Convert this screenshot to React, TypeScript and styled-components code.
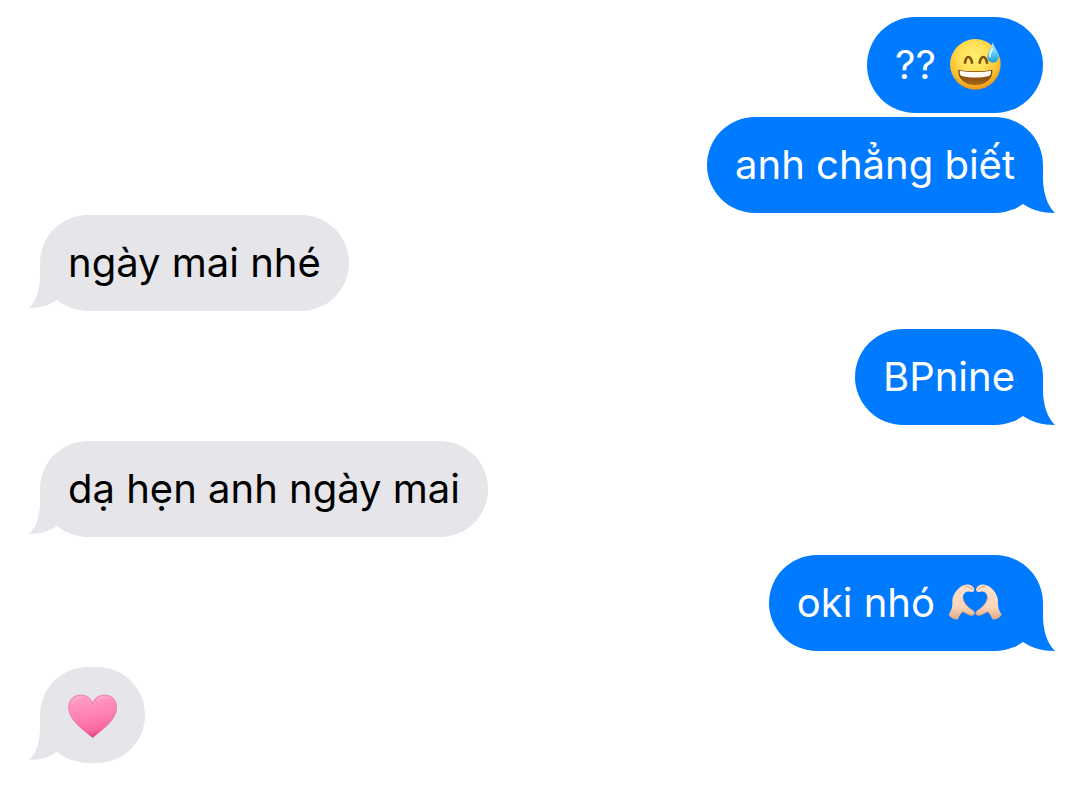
import React from "react";
import styled, { createGlobalStyle } from "styled-components";

const GlobalStyle = createGlobalStyle`
  body {
    margin: 0;
    background: #ffffff;
  }
`;

type Side = "sent" | "received";

const Conversation = styled.main`
  padding: 17px 37px 32px 40px;
  font-family: Inter, "Liberation Sans", sans-serif;
  font-size: 40px;
  line-height: 52px;
`;

const Thread = styled.ol`
  display: flex;
  flex-direction: column;
  margin: 0;
  padding: 0;
  list-style: none;
`;

const Bubble = styled.li<{ $side: Side; $gap: number }>`
  position: relative;
  display: flex;
  align-items: center;
  align-self: ${(p) => (p.$side === "sent" ? "flex-end" : "flex-start")};
  margin-top: ${(p) => p.$gap}px;
  padding: 22px 28px;
  border-radius: 48px;
  color: ${(p) => (p.$side === "sent" ? "#ffffff" : "#000000")};
  background: ${(p) => (p.$side === "sent" ? "#007aff" : "#e5e5ea")};
`;

const TailShape = styled.svg<{ $side: Side }>`
  position: absolute;
  bottom: 0;
  ${(p) => (p.$side === "sent" ? "right: -12px;" : "left: -12px;")}
  width: 36px;
  height: 56px;
  fill: ${(p) => (p.$side === "sent" ? "#007aff" : "#e5e5ea")};
`;

const Words = styled.span`
  white-space: nowrap;
`;

const Emoji = styled.svg<{ $inline?: boolean }>`
  flex: none;
  display: block;
  margin: ${(p) => (p.$inline ? "0 13px" : "0")};
`;

const Tail = ({ side }: { side: Side }) => (
  <TailShape $side={side} viewBox="0 0 36 56" aria-hidden="true">
    {side === "sent" ? (
      <path d="M10 8H24C24 12 24 16 24 22C24.300 36 28 48 36 56C23 56 13 53 4 47Z" />
    ) : (
      <path d="M26 8H12C12 12 12 16 12 22C11.500 36 8 47 1 53C13 53 21 50 29 45Z" />
    )}
  </TailShape>
);

const SweatSmile = () => (
  <Emoji $inline width="53" height="52" viewBox="26 27 159 156" role="img" aria-label="grinning face with sweat">
    <defs>
      <radialGradient id="face" cx="0.48" cy="0.36" r="0.66">
        <stop offset="0" stopColor="#ffee70" />
        <stop offset="0.45" stopColor="#ffdf55" />
        <stop offset="0.75" stopColor="#fcc030" />
        <stop offset="1" stopColor="#e88f14" />
      </radialGradient>
      <linearGradient id="mouth" x1="0" y1="0" x2="0" y2="1">
        <stop offset="0" stopColor="#6b3c0c" />
        <stop offset="1" stopColor="#a9681a" />
      </linearGradient>
      <linearGradient id="drop" x1="0" y1="0" x2="0" y2="1">
        <stop offset="0" stopColor="#c5eeff" />
        <stop offset="0.5" stopColor="#6fcdf7" />
        <stop offset="1" stopColor="#199bdc" />
      </linearGradient>
    </defs>
    <circle cx="105" cy="103" r="76" fill="url(#face)" />
    <path
      d="M74 98C76 86 79 81 84 81C90 81 93 87 95 98M118 98C120 86 124 81 129 81C135 81 138 87 140 98"
      fill="none"
      stroke="#85510f"
      strokeWidth="8"
      strokeLinecap="round"
    />
    <path d="M54 119C80 125 130 125 156 119C159 146 136 165 105 165C74 165 51 146 54 119Z" fill="url(#mouth)" />
    <path d="M58 122C82 127 128 127 152 122C153 130 151 136 146 138C120 144 90 144 64 138C59 136 57 130 58 122Z" fill="#fffdf4" />
    <path d="M157 36C160 51 175 65 175 79C175 91 167 98 158 98C147 98 140 90 141 79C142 66 155 52 157 36Z" fill="url(#drop)" />
    <path d="M156 57C151 66 148 72 149 79" fill="none" stroke="#effcff" strokeWidth="5" strokeLinecap="round" />
  </Emoji>
);

const HeartHands = () => (
  <Emoji $inline width="54" height="52" viewBox="25 21 162 156" role="img" aria-label="heart hands">
    <defs>
      <linearGradient id="skin" x1="0" y1="0" x2="0" y2="1">
        <stop offset="0" stopColor="#ffe0c8" />
        <stop offset="0.65" stopColor="#fbd5ba" />
        <stop offset="1" stopColor="#e3a882" />
      </linearGradient>
      <g id="hand">
        <path
          d="M27 134C36 122 39 109 38 94C38 78 48 62 62 51C72 44 86 41 96 47C103 51 106 59 102 64C97 68 90 64 83 65C74 67 69 75 70 84C71 98 85 113 99 121C106 126 107 133 101 136C91 138 80 130 70 125C63 129 59 137 55 148C44 149 33 144 27 134Z"
          fill="url(#skin)"
        />
        <path
          d="M78 49C86 49 93 53 99 58M103 128C103 133 101 136 96 136C87 135 80 130 70 125M70 84C71 98 85 113 99 121"
          fill="none"
          stroke="#d99c78"
          strokeWidth="3"
          strokeLinecap="round"
        />
      </g>
    </defs>
    <use href="#hand" />
    <use href="#hand" transform="translate(213 0) scale(-1 1)" />
  </Emoji>
);

const PinkHeart = () => (
  <Emoji width="49" height="52" viewBox="144 87 147 156" role="img" aria-label="pink heart">
    <defs>
      <linearGradient id="heart" x1="0.4" y1="0" x2="0.6" y2="1">
        <stop offset="0" stopColor="#ff9dc6" />
        <stop offset="0.5" stopColor="#ff80b4" />
        <stop offset="0.8" stopColor="#fb68a3" />
        <stop offset="1" stopColor="#d93a78" />
      </linearGradient>
    </defs>
    <path
      d="M218 131C222 115 236 105 253 105C275 105 290 120 290 142C290 180 248 208 218 233C188 208 146 180 146 142C146 120 161 105 183 105C200 105 214 115 218 131Z"
      fill="url(#heart)"
      stroke="#dd6c9a"
      strokeWidth="2"
    />
    <path d="M157 130C162 117 173 112 186 113M232 121C239 113 249 111 260 114" fill="none" stroke="#ffc4dc" strokeWidth="6" strokeLinecap="round" opacity="0.4" />
  </Emoji>
);

interface Message {
  side: Side;
  gap: number;
  tail: boolean;
  text?: string;
  emoji?: React.ReactNode;
}

const messages: Message[] = [
  { side: "sent", gap: 0, tail: false, text: "??", emoji: <SweatSmile /> },
  { side: "sent", gap: 4, tail: true, text: "anh chẳng biết" },
  { side: "received", gap: 2, tail: true, text: "ngày mai nhé" },
  { side: "sent", gap: 18, tail: true, text: "BPnine" },
  { side: "received", gap: 16, tail: true, text: "dạ hẹn anh ngày mai" },
  { side: "sent", gap: 18, tail: true, text: "oki nhó", emoji: <HeartHands /> },
  { side: "received", gap: 16, tail: true, emoji: <PinkHeart /> },
];

export default function App() {
  return (
    <>
      <GlobalStyle />
      <Conversation>
        <Thread>
          {messages.map((m, i) => (
            <Bubble key={i} $side={m.side} $gap={m.gap}>
              {m.tail && <Tail side={m.side} />}
              {m.text && <Words>{m.text}</Words>}
              {m.emoji}
            </Bubble>
          ))}
        </Thread>
      </Conversation>
    </>
  );
}
